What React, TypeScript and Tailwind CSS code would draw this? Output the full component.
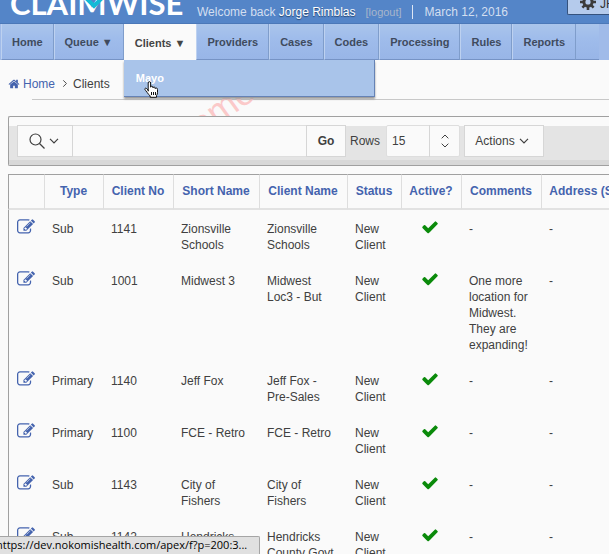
import type { ReactNode } from "react";

const navItems = ["Home", "Queue ▼", "Clients ▼", "Providers", "Cases", "Codes", "Processing", "Rules", "Reports"];

type Client = {
  type: string;
  no: string;
  shortName: string;
  name: string;
  comments: string;
};

const clients: Client[] = [
  { type: "Sub", no: "1141", shortName: "Zionsville Schools", name: "Zionsville Schools", comments: "-" },
  { type: "Sub", no: "1001", shortName: "Midwest 3", name: "Midwest Loc3 - But", comments: "One more location for Midwest. They are expanding!" },
  { type: "Primary", no: "1140", shortName: "Jeff Fox", name: "Jeff Fox - Pre-Sales", comments: "-" },
  { type: "Primary", no: "1100", shortName: "FCE - Retro", name: "FCE - Retro", comments: "-" },
  { type: "Sub", no: "1143", shortName: "City of Fishers", name: "City of Fishers", comments: "-" },
  { type: "Sub", no: "1142", shortName: "Hendricks County Govt", name: "Hendricks County Govt", comments: "-" },
];

const columns = [
  { label: "Type", width: "w-[59px]" },
  { label: "Client No", width: "w-[70px]" },
  { label: "Short Name", width: "w-[86px]" },
  { label: "Client Name", width: "w-[88px]" },
  { label: "Status", width: "w-[54px]" },
  { label: "Active?", width: "w-[60px]" },
  { label: "Comments", width: "w-[80px]" },
  { label: "Address (Street)", width: "w-[110px]" },
];

function Glyph({ d, className }: { d: string; className: string }) {
  return (
    <svg viewBox="0 0 1792 1792" fill="currentColor" aria-hidden="true" className={className}>
      <path d={d} />
    </svg>
  );
}

const editPath =
  "M888 1184l116-116-152-152-116 116v56h96v96h56zm440-720q-16-16-33 1l-350 350q-17 17-1 33t33-1l350-350q17-17 1-33zm80 594v190q0 119-84.5 203.5t-203.5 84.5h-832q-119 0-203.5-84.5t-84.5-203.5v-832q0-119 84.5-203.5t203.5-84.5h832q63 0 117 25 15 7 18 23 3 17-9 29l-49 49q-14 14-32 8-23-6-45-6h-832q-66 0-113 47t-47 113v832q0 66 47 113t113 47h832q66 0 113-47t47-113v-126q0-13 9-22l64-64q15-15 35-7t20 29zm-96-738l288 288-672 672h-288v-288zm444 132l-92 92-288-288 92-92q28-28 68-28t68 28l152 152q28 28 28 68t-28 68z";
const checkPath =
  "M1671 566q0 40-28 68l-724 724-136 136q-28 28-68 28t-68-28l-136-136-362-362q-28-28-28-68t28-68l136-136q28-28 68-28t68 28l294 295 656-657q28-28 68-28t68 28l136 136q28 28 28 68z";
const homePath =
  "M1472 992v480q0 26-19 45t-45 19h-384v-384h-256v384h-384q-26 0-45-19t-19-45v-480q0-1 .5-3t.5-3l575-474 575 474q1 2 1 6zm223-69l-62 74q-8 9-21 11h-3q-13 0-21-7l-692-577-692 577q-12 8-24 7-13-2-21-11l-62-74q-8-10-7-23.5t11-21.5l719-599q32-26 76-26t76 26l244 204v-195q0-14 9-23t23-9h192q14 0 23 9t9 23v408l219 182q10 8 11 21.5t-7 23.5z";

function Chevron({ className }: { className: string }) {
  return (
    <svg viewBox="0 0 10 6" fill="none" stroke="currentColor" strokeWidth="1.2" aria-hidden="true" className={className}>
      <path d="M1 .8 5 4.8 9 .8" />
    </svg>
  );
}

function Header() {
  return (
    <header className="flex h-6 items-start border-b border-[#4b78b8] bg-[#5485c8] text-xs text-[#d3dff0]">
      <div className="relative ml-2.5 h-[23px] w-[187px] shrink-0 overflow-hidden">
        <span className="absolute bottom-1 left-0 font-['Lato'] text-[31px] leading-8 font-bold text-white">CLAIMWISE</span>
        <svg viewBox="0 0 24 12" fill="none" aria-hidden="true" className="absolute top-0 left-[72px] h-3 w-6">
          <path d="M2-4 12 6 22-4" stroke="#12bad6" strokeWidth="4" />
        </svg>
      </div>
      <p className="flex items-center pt-1 leading-4 whitespace-pre">
        Welcome back <span className="text-white [text-shadow:0_1px_1px_#26456f]">Jorge Rimblas</span>
      </p>
      <a href="#logout" className="ml-2.5 pt-1 text-[11px] leading-4 whitespace-nowrap text-[#a8b6cb]">
        [logout]
      </a>
      <span className="mt-[5px] ml-2.5 h-3.5 w-px shrink-0 bg-[#dde6f4]" />
      <span className="ml-3 pt-1 leading-4 whitespace-nowrap">March 12, 2016</span>
      <button className="ml-auto flex h-[15px] w-[42px] shrink-0 items-end gap-1 overflow-hidden rounded-bl-xs border-b border-l border-[#35527d] bg-[#b5cbec] pl-3 text-[#333]">
        <svg viewBox="0 0 16 16" aria-hidden="true" className="mb-1 h-4 w-4 shrink-0">
          <g fill="#3c3c3c">
            <circle cx="8" cy="8" r="5.6" />
            <g stroke="#3c3c3c" strokeWidth="2.6">
              <path d="M8 0v16M0 8h16M2.4 2.4l11.2 11.2M13.6 2.4 2.4 13.6" />
            </g>
          </g>
          <circle cx="8" cy="8" r="2.6" fill="#b5cbec" />
        </svg>
        <span className="pb-0.5 leading-4">JR</span>
      </button>
    </header>
  );
}

function NavItem({ label }: { label: string }) {
  const active = label.startsWith("Clients");
  return (
    <li className="relative shrink-0">
      <a
        href={"#" + label.split(" ")[0].toLowerCase()}
        className={
          active
            ? "flex h-9 items-center border-x border-[#fafafa] bg-[#fafafa] px-2.5 pt-0.5 whitespace-nowrap text-[#454545]"
            : "flex h-9 items-center border-r border-b border-l border-r-[#7f9dcb] border-b-[#7693c5] border-l-[#bdd1f0] px-2.5 pt-0.5 whitespace-nowrap"
        }
      >
        {label}
      </a>
      {active && (
        <div className="absolute top-9 left-0 z-10 h-[37px] w-[251px] border-r border-b border-[#6582b5] bg-[#a9c4ea] pt-2.5 pl-3 text-white shadow-[0_2px_2px_#999]">
          <a href="#mayo" className="block leading-4">
            Mayo
          </a>
          <svg viewBox="0 0 15 17" aria-hidden="true" className="absolute top-[21px] left-5 h-[17px] w-[15px]">
            <path
              d="M4.2 10.2V2q0-1.3 1.2-1.3T6.600 2v4.200q0-1 1.100-1t1.200 1v.7q.2-.9 1.200-.9t1.100 1.200v.5q.2-.7 1.100-.7 1.200 0 1.200 1.500v3.200q0 1.400-1 3v1.600H6.200v-1.300Q4.600 13.500 3.200 11.500 1.400 9.300 1 8.600q-.4-1.200.5-1.400 1-.2 2.700 2z"
              fill="#fff"
              stroke="#111"
            />
            <path d="M7.500 11v3M9.500 11v3M11.500 11v3" stroke="#111" />
          </svg>
        </div>
      )}
    </li>
  );
}

function Nav() {
  return (
    <nav className="bg-[#a0bbe9] pr-2.5 pl-px">
      <ul className="flex h-9 bg-linear-to-b from-[#aac5eb] from-0% via-[#9fbceb] via-40% to-[#98b5e7] text-[11px] font-bold text-[#3f4b5e]">
        {navItems.map((label) => (
          <NavItem key={label} label={label} />
        ))}
        <li className="grow border-b border-[#7693c5]" />
      </ul>
    </nav>
  );
}

function Breadcrumb() {
  return (
    <div className="relative h-14 overflow-hidden">
      <span aria-hidden="true" className="absolute top-[32px] left-[187px] -rotate-[36deg] text-[36px] leading-8 text-[#fbc9c9]">
        ome
      </span>
      <ol className="flex h-[39px] items-center pt-2 pl-2 text-xs">
        <li>
          <a href="#home" className="flex items-center text-[#4463ae]">
            <Glyph d={homePath} className="mr-[3px] h-3 w-3" />
            Home
          </a>
        </li>
        <li aria-hidden="true" className="mr-1 ml-1.5 text-[#444]">
          <Chevron className="h-[5px] w-2 -rotate-90" />
        </li>
        <li>Clients</li>
      </ol>
      <div className="ml-8 h-px bg-[#c8c8c8]" />
    </div>
  );
}

function Control({ className, children, label }: { className: string; children: ReactNode; label?: string }) {
  return (
    <button aria-label={label} className={"flex h-8 shrink-0 items-center justify-center border border-[#d6d6d6] bg-[#fafafa] " + className}>
      {children}
    </button>
  );
}

function Toolbar() {
  return (
    <section className="ml-2 h-[50px] overflow-hidden rounded-l-xs border-y border-l border-[#a0a0a0] bg-[#fafafa] pt-[9px] text-xs">
      <div className="flex h-[34px] items-start bg-[#e4e4e4] pl-2">
        <Control className="-mt-px w-14 gap-1 pr-0.5" label="Search column">
          <svg viewBox="0 0 16 16" fill="none" stroke="currentColor" strokeWidth="1.2" aria-hidden="true" className="h-4 w-4">
            <circle cx="6.500" cy="6.500" r="5.500" />
            <path d="m10.500 10.500 5 5" />
          </svg>
          <Chevron className="h-1.5 w-2.5" />
        </Control>
        <input
          aria-label="Search"
          className="-mt-px h-8 w-[233px] shrink-0 border-y border-[#dedede] bg-[#fafafa] px-2 outline-none"
        />
        <Control className="-mt-px w-10 font-bold">Go</Control>
        <label htmlFor="rows" className="-mt-px w-10 shrink-0 pl-1 leading-8">
          Rows
        </label>
        <div className="relative -mt-px mr-1 h-8 w-[74px] shrink-0">
          <select id="rows" defaultValue="15" className="h-8 w-full appearance-none rounded-xs border border-[#dedede] bg-[#fafafa] px-[5px] outline-none">
            <option>15</option>
            <option>50</option>
          </select>
          <span className="pointer-events-none absolute top-0 right-0 flex h-8 w-[31px] flex-col items-center justify-center gap-1 border-l border-[#d6d6d6]">
            <Chevron className="h-[5px] w-2.5 rotate-180" />
            <Chevron className="h-[5px] w-2.5" />
          </span>
        </div>
        <Control className="-mt-px w-20 gap-1 pr-1">
          Actions
          <Chevron className="h-1.5 w-2.5" />
        </Control>
      </div>
      <div className="h-1.5 bg-[#d8d8d8]" />
    </section>
  );
}

function Report() {
  return (
    <div className="mt-2 ml-2 overflow-hidden">
      <table className="w-[644px] table-fixed border-separate border-spacing-0 text-left text-xs leading-4">
        <thead>
          <tr className="h-9 text-center text-[#4463ae]">
            <th aria-label="Edit" className="w-[37px] border-t border-r border-b-2 border-l border-t-[#a0a0a0] border-r-[#dedede] border-b-[#e2e2e2] border-l-[#a0a0a0]" />
            {columns.map((c) => (
              <th
                key={c.label}
                className={c.width + " border-t border-r border-b-2 border-t-[#a0a0a0] border-r-[#dedede] border-b-[#e2e2e2] pr-px pb-0.5 font-bold whitespace-nowrap"}
              >
                {c.label}
              </th>
            ))}
          </tr>
        </thead>
        <tbody>
          {clients.map((c) => (
            <tr key={c.no} className="align-top">
              <td className="border-l border-[#a0a0a0] pt-2 pl-2">
                <a href={"#client-" + c.no} aria-label={"Edit client " + c.no} className="block text-[#4463ae]">
                  <Glyph d={editPath} className="h-[18px] w-[18px]" />
                </a>
              </td>
              <td className="pt-[11px] pb-[9px] pl-[7px]">{c.type}</td>
              <td className="pt-[11px] pb-[9px] pl-[7px]">{c.no}</td>
              <td className="pt-[11px] pr-2 pb-[9px] pl-[7px]">{c.shortName}</td>
              <td className="pt-[11px] pr-2 pb-[9px] pl-[7px]">{c.name}</td>
              <td className="pt-[11px] pr-2 pb-[9px] pl-[7px]">New Client</td>
              <td className="pt-2 pr-1 text-[#0a8a0a]">
                <Glyph d={checkPath} className="mx-auto h-[18px] w-[18px]" />
              </td>
              <td className="pt-[11px] pr-1 pb-[9px] pl-[7px]">{c.comments}</td>
              <td className="pt-[11px] pb-[9px] pl-[7px]">-</td>
            </tr>
          ))}
        </tbody>
      </table>
    </div>
  );
}

export default function App() {
  return (
    <div className="relative h-screen overflow-hidden bg-[#fafafa] font-['Liberation_Sans',Arial,sans-serif] text-[#404040]">
      <Header />
      <Nav />
      <Breadcrumb />
      <Toolbar />
      <Report />
      <div className="absolute bottom-0 left-0 flex h-[18px] items-center overflow-hidden rounded-tr-xs border-t border-r border-[#a5a5a5] bg-[#e0e0e0] pr-3 font-['Open_Sans',sans-serif] text-[11px] text-black">
        <span className="-ml-1 whitespace-nowrap">https://dev.nokomishealth.com/apex/f?p=200:3...</span>
      </div>
    </div>
  );
}
